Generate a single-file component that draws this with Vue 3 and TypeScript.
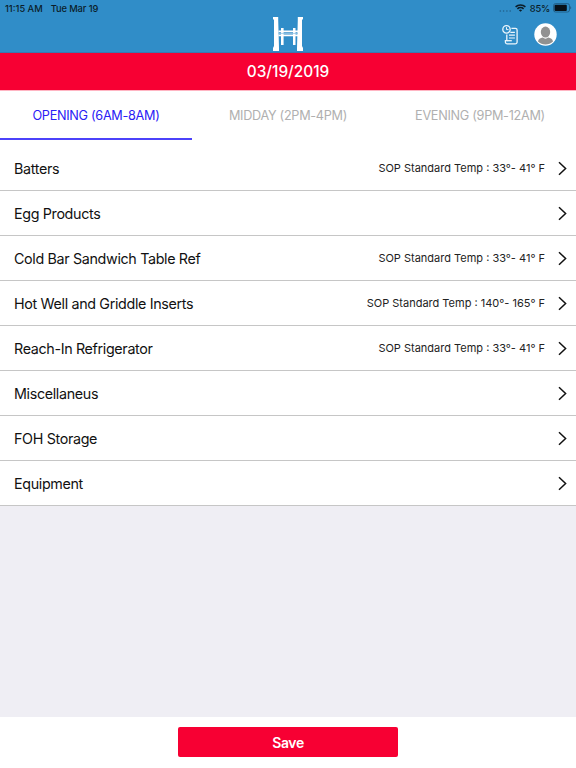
<script setup lang="ts">
import { ref } from 'vue'

interface Row {
  name: string
  temp?: string
}

const tabs: string[] = ['OPENING (6AM-8AM)', 'MIDDAY (2PM-4PM)', 'EVENING (9PM-12AM)']
const activeTab = ref(0)

const rows: Row[] = [
  { name: 'Batters', temp: '33°- 41° F' },
  { name: 'Egg Products' },
  { name: 'Cold Bar Sandwich Table Ref', temp: '33°- 41° F' },
  { name: 'Hot Well and Griddle Inserts', temp: '140°- 165° F' },
  { name: 'Reach-In Refrigerator', temp: '33°- 41° F' },
  { name: 'Miscellaneus' },
  { name: 'FOH Storage' },
  { name: 'Equipment' },
]
</script>

<template>
  <div class="screen">
    <header class="header">
      <div class="status">
        <span class="clock">11:15 AM</span>
        <span class="day">Tue Mar 19</span>
        <span class="spacer"></span>
        <svg class="signal" width="13" height="4" viewBox="0 0 13 4" fill="#215f89">
          <circle cx="1.3" cy="2" r=".8" /><circle cx="4.6" cy="2" r=".8" />
          <circle cx="7.9" cy="2" r=".8" /><circle cx="11.2" cy="2" r=".8" />
        </svg>
        <svg class="wifi" width="11" height="8" viewBox="0 0 11 8" fill="none" stroke="#0b1d2a" stroke-width="1.5">
          <path d="M.6 2.9a7 7 0 0 1 9.8 0M2.4 4.9a4.4 4.4 0 0 1 6.2 0" />
          <path d="M3.9 6.2a2.3 2.3 0 0 1 3.2 0L5.5 7.8z" fill="#0b1d2a" stroke="none" />
        </svg>
        <span class="percent">85%</span>
        <svg class="battery" width="19" height="10" viewBox="0 0 19 10">
          <rect x=".5" y=".6" width="16" height="8.4" rx="2" fill="none" stroke="#1d557c" stroke-width=".8" />
          <rect x="1.5" y="1.7" width="12.3" height="6.2" rx="1" fill="#071018" />
          <path d="M17.3 3.3c1.2.4 1.2 2.6 0 3z" fill="#1d557c" />
        </svg>
      </div>
      <div class="bar">
        <svg class="logo" width="30" height="34" viewBox="0 0 30 34">
          <path
            fill="#fff"
            d="M0 0h5.2v3L6 31v3H0v-3L1 29V3L0 2zM24.8 0H30v2l-1 1v26l1 2v3h-6v-3l.8-28z"
          />
          <path fill="#fff" d="M8 11h2.6v17H8zM20 11h2.5v17H20z" />
          <path d="M5.5 14.4H25M5.5 18.3H25" fill="none" stroke="#fff" stroke-width="1.7" />
          <path d="M5.5 16.4H25" fill="none" stroke="#9bc9e8" stroke-width=".9" />
        </svg>
        <div class="actions">
          <svg width="17" height="20" viewBox="0 0 17 20" fill="none" stroke="#edf6fc" stroke-width="1.3">
            <circle cx="4.5" cy="4.4" r="3.7" />
            <path d="M4.5 2.2v2.4h2" stroke-width="1" />
            <path d="M9.4 3.3h4a1.7 1.700 0 0 1 1.700 1.700v12a1.900 1.900 0 0 1-1.900 1.900H5.300a1.900 1.900 0 0 1-1.900-1.900v-1.300h1.400V9.600" />
            <path d="M4.800 15.700h5" />
            <path d="M8.300 7.300h4.600M7 10.200h5.900M7 13h5.900" stroke-width="1.200" />
          </svg>
          <svg width="23" height="23" viewBox="0 0 23 23">
            <circle cx="11.5" cy="11.5" r="11.2" fill="#fff" />
            <ellipse cx="11.5" cy="9.1" rx="4.700" ry="5.500" fill="#919191" />
            <path d="M4 18.400c.5-2.400 2.300-3.400 4.700-3.900 1.700 1.500 3.900 1.500 5.600 0 2.400.5 4.200 1.500 4.700 3.900-4 4-11 4-15 0z" fill="#919191" />
          </svg>
        </div>
      </div>
    </header>

    <div class="date"><span>03/19/2019</span></div>

    <nav class="tabs">
      <button
        v-for="(tab, i) in tabs"
        :key="tab"
        class="tab"
        :class="{ active: i === activeTab }"
        @click="activeTab = i"
      >
        {{ tab }}
      </button>
    </nav>

    <ul class="list">
      <li v-for="row in rows" :key="row.name" class="row">
        <span class="name">{{ row.name }}</span>
        <span v-if="row.temp" class="temp">SOP Standard Temp : {{ row.temp }}</span>
        <svg class="chevron" width="9" height="15" viewBox="0 0 9 15">
          <path d="M1 1.2 7.6 7.5 1 13.8" fill="none" stroke="#111" stroke-width="1.5" />
        </svg>
      </li>
    </ul>

    <footer class="footer">
      <button class="save">Save</button>
    </footer>
  </div>
</template>

<style>
body {
  margin: 0;
}
</style>

<style scoped>
.screen {
  display: flex;
  flex-direction: column;
  width: 576px;
  height: 768px;
  overflow: hidden;
  background: #efeef4;
  font-family: Inter, 'Liberation Sans', sans-serif;
}
.header {
  box-sizing: border-box;
  height: 53px;
  flex: none;
  background: #308dc8;
  border-bottom: 1px solid #3a77ae;
}
.status {
  display: flex;
  align-items: center;
  height: 16px;
  padding: 0 4px 0 5px;
  font-size: 9.3px;
  font-weight: 500;
  color: #0b1d2a;
  white-space: nowrap;
}
.day {
  margin-left: 8px;
  letter-spacing: -0.1px;
}
.spacer {
  flex: 1;
}
.signal {
  margin: 5px 3px 0 0;
}
.wifi {
  margin-right: 4px;
}
.percent {
  margin-right: 3px;
  letter-spacing: -0.2px;
}
.bar {
  position: relative;
  display: flex;
  justify-content: center;
  height: 36px;
}
.logo {
  margin-top: 1px;
}
.actions {
  position: absolute;
  right: 19px;
  top: 7px;
  display: flex;
  align-items: center;
  gap: 15px;
}
.date {
  box-sizing: border-box;
  display: flex;
  align-items: center;
  justify-content: center;
  flex: none;
  height: 38px;
  border-bottom: 1px solid #ffb5c3;
  background: #f70033;
  color: #fff;
  font-size: 15.4px;
  font-weight: 500;
}
.tabs {
  display: flex;
  flex: none;
  height: 49px;
  background: #fff;
}
.tab {
  flex: 1;
  padding: 2px 0 0;
  border: 0;
  border-bottom: 2px solid transparent;
  background: none;
  font: 400 12.7px Inter, 'Liberation Sans', sans-serif;
  letter-spacing: -0.3px;
  color: #b0b0b0;
  white-space: nowrap;
}
.tab.active {
  color: #2a20f5;
  border-bottom-color: #4c42fa;
}
.list {
  flex: none;
  margin: 0;
  padding: 6px 0 0;
  list-style: none;
  background: #fff;
}
.row {
  box-sizing: border-box;
  display: flex;
  align-items: center;
  height: 45px;
  padding: 0 9px 0 14px;
  border-bottom: 1px solid #c6c6c6;
}
.name {
  flex: 1;
  font-size: 14.3px;
  letter-spacing: -0.34px;
  color: #111;
}
.temp {
  font-size: 11px;
  color: #222;
}
.chevron {
  margin-left: 13px;
}
.footer {
  display: flex;
  justify-content: center;
  box-sizing: border-box;
  height: 51px;
  margin-top: auto;
  padding-top: 10px;
  background: #fff;
}
.save {
  width: 220px;
  height: 30px;
  padding: 0;
  border: 0;
  border-radius: 2px;
  background: #f70033;
  color: #fff;
  font: 600 14px Inter, 'Liberation Sans', sans-serif;
  letter-spacing: -0.4px;
}
</style>
